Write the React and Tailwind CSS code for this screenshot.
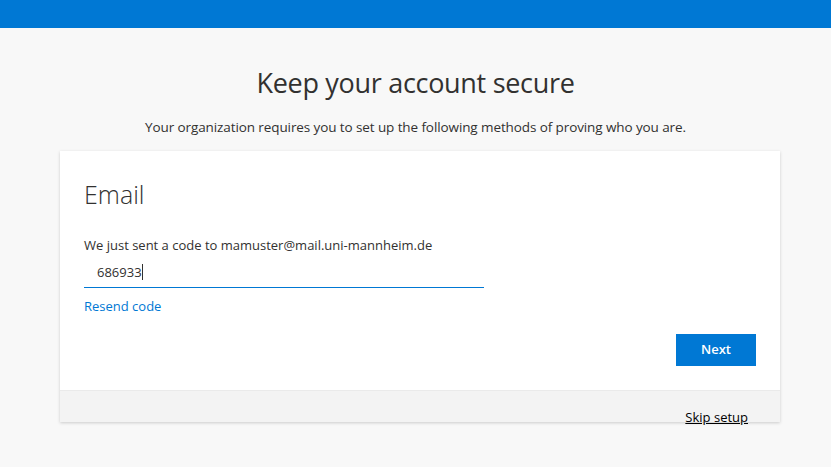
export default function App() {
  return (
    <div
      className="min-h-[467px] bg-[#f8f8f8] text-[#323130]"
      style={{ fontFamily: '"Open Sans", "Noto Sans", sans-serif' }}
    >
      <div className="h-[28px] bg-[#0078d4]" />

      <div className="flex flex-col items-center">
        <h1 className="mt-[37px] text-[27px] font-normal leading-[36px] tracking-[-0.3px]">
          Keep your account secure
        </h1>
        <p className="mt-[16px] text-[13.5px] leading-[20px] tracking-[-0.1px]">
          Your organization requires you to set up the following methods of proving who you are.
        </p>
      </div>

      <div className="mx-[60px] mt-[14px] w-[720px] bg-white shadow-[0_1px_3px_rgba(0,0,0,0.18)]">
        <div className="px-[24px] pt-[26px] pb-[24px]">
          <h2 className="text-[25px] font-light leading-[34px] text-[#323130]">Email</h2>
          <p className="mt-[25px] text-[13px] leading-[18px]">
            We just sent a code to mamuster@mail.uni-mannheim.de
          </p>
          <div className="mt-[5px] w-[400px]">
            <div className="pl-[13px] pb-[4px]">
              <span className="text-[13px] leading-[18px]">686933</span>
              <span className="inline-block w-px h-[16px] bg-[#323130] align-[-3px]" />
            </div>
            <div className="h-px bg-[#0078d4]" />
          </div>
          <a className="mt-[9px] block text-[13px] leading-[18px] text-[#0078d4]">Resend code</a>
          <div className="mt-[19px] flex justify-end">
            <button className="h-[32px] w-[80px] bg-[#0078d4] text-[13px] font-semibold text-white">
              Next
            </button>
          </div>
        </div>
        <div className="h-[32px] border-t border-[#eaeaea] bg-[#f3f3f3] flex justify-end items-end pr-[32px]">
          <a className="text-[13px] leading-[18px] text-black underline translate-y-[4px]">Skip setup</a>
        </div>
      </div>
    </div>
  );
}
